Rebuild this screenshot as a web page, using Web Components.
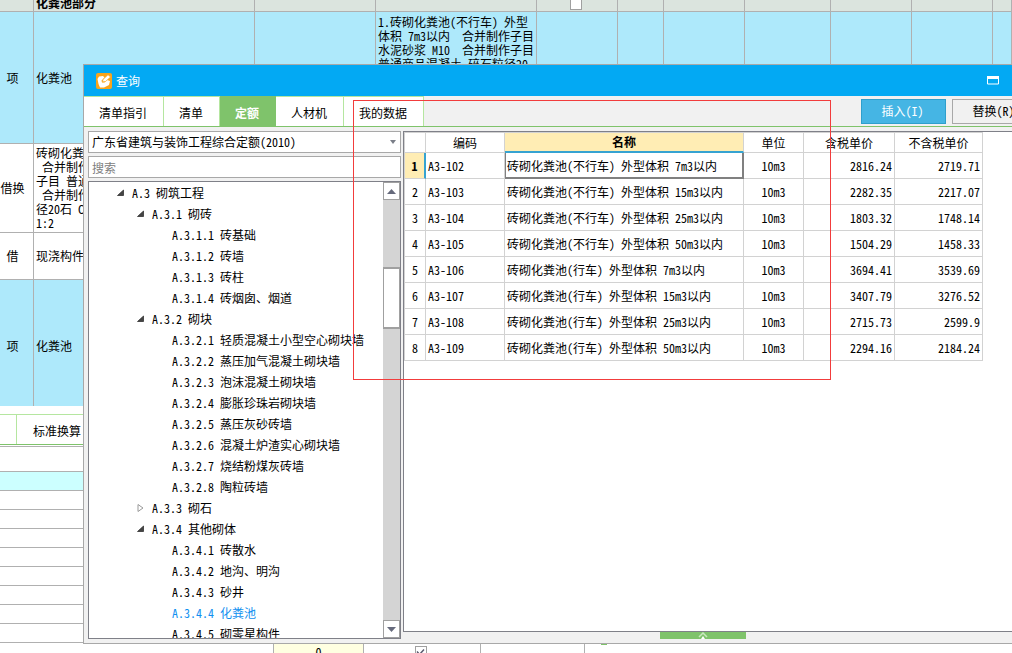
<!DOCTYPE html>
<html lang="zh-CN">
<head>
<meta charset="utf-8">
<title>查询</title>
<style>
body{margin:0;background:#fff;color:#000;font:12px/14px "Noto Sans Mono CJK SC","Noto Sans CJK SC",monospace}
</style>
</head>
<body>
<budget-app></budget-app>
<script>
function define(name, html, setup) {
  customElements.define(name, class extends HTMLElement {
    constructor() {
      super();
      const t = document.createElement('template');
      t.innerHTML = html;
      this.attachShadow({mode: 'open'}).append(t.content.cloneNode(true));
      if (setup) setup(this.shadowRoot);
    }
  });
}

define('tick-box', `
<style>
:host{display:inline-block;vertical-align:middle;line-height:0}
input{appearance:none;display:block;box-sizing:border-box;width:12px;height:12px;margin:0;border:1px solid #a0a0a0;background:#fff}
label{display:grid}
input,svg{grid-area:1/1}
svg{display:none;width:12px;height:12px}
input:checked+svg{display:block}
</style>
<label><input type="checkbox" aria-label="选择"><svg viewBox="0 0 12 12"><path d="M2 5.500l2.500 3L9 3.500" fill="none" stroke="#5c5c70" stroke-width="1.500"/></svg></label>`);

// Bill of quantities behind the dialog
define('bill-sheet', `
<style>
:host{display:block;margin-top:-6px}
table{width:100%;border-spacing:0;table-layout:fixed}
td{box-sizing:border-box;padding:0 2px;border-right:1px solid #b0b0b0;border-bottom:1px solid #b0b0b0;white-space:pre;overflow:hidden}
td:first-child{text-align:center;padding:0 8px 0 0}
.head{background:#dbe4de;font-weight:bold}
.head td{height:18px;line-height:16px}
.head .c{text-align:center;padding:0 4px 0 2px}
.item{background:#aee9fb}
.item td{height:132px}
.item .desc{vertical-align:top;padding-top:3px}
.sub td{height:89px}
.sub.low td{height:47px}
.item.last td{height:126px;border-bottom:0;padding-top:6px}
.desc div{height:56px}
</style>
<table>
<colgroup><col style="width:34px"><col style="width:221px"><col style="width:121px"><col style="width:161px"><col style="width:81px"><col style="width:46px"><col style="width:81px"><col style="width:86px"><col style="width:81px"><col style="width:81px"><col></colgroup>
<tbody>
<tr class="head"><td></td><td>化粪池部分</td><td></td><td></td><td class="c"><tick-box></tick-box></td><td></td><td></td><td></td><td></td><td></td><td></td></tr>
<tr class="item"><td>项</td><td>化粪池</td><td></td><td class="desc"><div>1.砖砌化粪池(不行车) 外型
体积 7m3以内  合并制作子目
水泥砂浆 M10  合并制作子目
普通商品混凝土 碎石粒径20</div></td><td></td><td></td><td></td><td></td><td></td><td></td><td></td></tr>
<tr class="sub"><td>借换</td><td>砖砌化粪
 合并制作
子目 普通
 合并制作
径20石 C
1:2</td><td></td><td></td><td></td><td></td><td></td><td></td><td></td><td></td><td></td></tr>
<tr class="sub low"><td>借</td><td>现浇构件</td><td></td><td></td><td></td><td></td><td></td><td></td><td></td><td></td><td></td></tr>
<tr class="item last"><td>项</td><td>化粪池</td><td></td><td></td><td></td><td></td><td></td><td></td><td></td><td></td><td></td></tr>
</tbody></table>`);

define('detail-pane', `
<style>
:host{display:block;flex:1;min-height:0;margin-top:8px;overflow:hidden}
nav{display:flex;height:29px;border-top:1px solid #b5e6a0;border-bottom:1px solid #7fc36b}
i{width:16px;border-right:1px solid #b5e6a0}
button{border:0;background:none;padding:3px 16px 0;font:inherit;color:inherit}
ul{list-style:none;margin:1px 0 0;padding:0;border-top:1px solid #b0b0b0}
li{height:18px;border-bottom:1px solid #b0b0b0}
li:first-child{height:24px}
.on{background:#ccffff}
</style>
<nav><i></i><button>标准换算</button></nav>
<ul><li></li><li class="on"></li><li></li><li></li><li></li><li></li><li></li><li></li><li></li><li></li></ul>`);

define('sum-strip', `
<style>
:host{display:grid;grid-template-columns:274px 90px 117px 104px 1fr;height:10px;overflow:hidden}
div{box-sizing:border-box;height:18px;border-right:1px solid #b0b0b0;text-align:center;line-height:18px}
.y{background:#ffffe1}
.t{padding:3px 3px 0 0;line-height:0}
.g{border:0;padding-left:16px}
.g::before{content:"";display:block;width:6px;height:2px;background:#7fc36b}
</style>
<div></div><div class="y">0</div><div class="t"><tick-box></tick-box></div><div></div><div class="g"></div>`,
root => {
  const box = root.querySelector('tick-box');
  customElements.upgrade(box);
  box.shadowRoot.querySelector('input').checked = true;
});

define('title-bar', `
<style>
:host{display:flex;align-items:center;gap:4px;height:31px;padding:0 73px 0 12px;background:#03a9f3;color:#fff}
h1{margin:0 auto 0 0;font:inherit}
button{border:0;background:none;padding:0;line-height:0}
</style>
<svg width="16" height="16" viewBox="0 0 16 16"><rect width="16" height="16" rx="2" fill="#f9a41a"/><path d="M1.500 6L3 3.500 7 3 8.500 4.500 5.500 7.500 6 9.500 8.500 9.500 11 7 14 8 13 12 8 14.500H4L2.500 11z" fill="#fff"/><path d="M6.500 8.800L7 6.500 12 1.800 14.500 4 9.500 8.500z" fill="#fff" stroke="#f9a41a" stroke-width=".6"/></svg>
<h1>查询</h1>
<button aria-label="最大化"><svg width="12" height="9" viewBox="0 0 12 9"><path d="M.5.5h11v7.500H.5z" fill="none" stroke="#fff"/><path d="M0 0h12v3H0z" fill="#fff"/></svg></button>`);

define('tab-bar', `
<style>
:host{display:flex;height:30px;border-bottom:1px solid #7fc36b;background:#f1f1f1;padding-right:35px}
[role=tablist]{display:flex;margin-right:auto}
button{font:inherit;color:inherit;white-space:nowrap}
[role=tab]{border:solid #b5e6a0;border-width:1px 1px 0 0;background:#fff;padding:2px 16px 0 15px}
[aria-selected=true]{background:#7fc36b;border-color:#7fc36b;color:#fff;font-weight:bold}
.act{display:flex;gap:6px;align-items:center}
.act button{height:25px;width:85px;padding:0 2px 0 0;border:1px solid #a8a8a8;background:#f1f1f1}
.act .go{background:#45b5e4;border-color:#2f9fcc;color:#fff}
</style>
<div role="tablist"><button role="tab">清单指引</button><button role="tab">清单</button><button role="tab" aria-selected="true">定额</button><button role="tab">人材机</button><button role="tab">我的数据</button></div>
<div class="act"><button class="go">插入(I)</button><button>替换(R)</button></div>`);

define('quota-tree', `
<style>
:host{display:flex;flex:1;min-height:0;border:1px solid #7f8088;background:#fff;overflow:hidden}
.view{flex:1;overflow:hidden}
ul{list-style:none;margin:0;padding:0 0 0 20px}
.view>ul{padding-left:28px}
div.n{display:flex;align-items:center;height:21px;gap:8px;white-space:pre}
svg{flex:none;width:7px;height:8px}
.on{color:#1090f0}
.bar{width:17px;background:#d4d4d4;display:flex;flex-direction:column}
.bar button{box-sizing:border-box;height:18px;border:1px solid #a0a0a0;background:#fff;padding:0;display:grid;place-items:center}
.bar svg{width:9px;height:5px;margin:0}
.thumb{height:58px;margin:67px 0 auto;border:solid #a0a0a0;border-width:2px 1px;background:#fff}
</style>
<div class="view"></div>
<div class="bar"><button aria-label="向上"><svg viewBox="0 0 9 5"><path d="M0 5l4.500-5L9 5z" fill="#666a7c"/></svg></button><div class="thumb"></div><button aria-label="向下"><svg viewBox="0 0 9 5"><path d="M0 0l4.500 5L9 0z" fill="#666a7c"/></svg></button></div>`,
root => {
  const data = [['A.3 砌筑工程', [
    ['A.3.1 砌砖', [['A.3.1.1 砖基础'], ['A.3.1.2 砖墙'], ['A.3.1.3 砖柱'], ['A.3.1.4 砖烟囱、烟道']]],
    ['A.3.2 砌块', [['A.3.2.1 轻质混凝土小型空心砌块墙'], ['A.3.2.2 蒸压加气混凝土砌块墙'], ['A.3.2.3 泡沫混凝土砌块墙'], ['A.3.2.4 膨胀珍珠岩砌块墙'], ['A.3.2.5 蒸压灰砂砖墙'], ['A.3.2.6 混凝土炉渣实心砌块墙'], ['A.3.2.7 烧结粉煤灰砖墙'], ['A.3.2.8 陶粒砖墙']]],
    ['A.3.3 砌石', []],
    ['A.3.4 其他砌体', [['A.3.4.1 砖散水'], ['A.3.4.2 地沟、明沟'], ['A.3.4.3 砂井'], ['A.3.4.4 化粪池'], ['A.3.4.5 砌零星构件']]]
  ]]];
  const open = '<path d="M6.500 1v5.500H.5z" fill="#444" stroke="#222" stroke-width=".7"/>';
  const shut = '<path d="M1 .5L6 4 1 7.500z" fill="#fff" stroke="#999"/>';
  const list = items => '<ul>' + items.map(([text, kids]) =>
    `<li><div class="n${text.startsWith('A.3.4.4') ? ' on' : ''}"><svg viewBox="0 0 7 8">${kids ? (kids.length ? open : shut) : ''}</svg>${text}</div>${kids && kids.length ? list(kids) : ''}</li>`).join('') + '</ul>';
  root.querySelector('.view').innerHTML = list(data);
});

define('quota-grid', `
<style>
:host{display:block;flex:1;min-height:0;border:1px solid #7f8088;background:#fff;overflow:hidden}
table{width:579px;table-layout:fixed;border-spacing:0;border:solid #d2d2d2;border-width:1px 0 0 1px}
th,td{box-sizing:border-box;padding:0 2px;border:solid #d2d2d2;border-width:0 1px 1px 0;font-weight:normal;white-space:pre}
th{height:20px}
td{height:26px}
tbody th{text-align:center;padding:0}
td:nth-child(4){text-align:center}
td:nth-child(n+5){text-align:right}
thead .on{background:#ffedb4;font-weight:bold;border-bottom:2px solid #36a3d1}
tbody .on{background:#ffedb4;font-weight:bold;border-right:2px solid #36a3d1}
td.cell{border:solid #808080;border-width:0 2px 2px 0;box-shadow:inset 1px 0 #808080;padding-top:2px}
</style>
<table>
<colgroup><col style="width:21px"><col style="width:79px"><col style="width:239px"><col style="width:60px"><col style="width:91px"><col style="width:88px"></colgroup>
<thead><tr><th></th><th>编码</th><th class="on">名称</th><th>单位</th><th>含税单价</th><th>不含税单价</th></tr></thead>
<tbody></tbody></table>`,
root => {
  const rows = [
    ['A3-102', '(不行车) 外型体积 7m3以内', '2816.24', '2719.71'],
    ['A3-103', '(不行车) 外型体积 15m3以内', '2282.35', '2217.07'],
    ['A3-104', '(不行车) 外型体积 25m3以内', '1803.32', '1748.14'],
    ['A3-105', '(不行车) 外型体积 50m3以内', '1504.29', '1458.33'],
    ['A3-106', '(行车) 外型体积 7m3以内', '3694.41', '3539.69'],
    ['A3-107', '(行车) 外型体积 15m3以内', '3407.79', '3276.52'],
    ['A3-108', '(行车) 外型体积 25m3以内', '2715.73', '2599.9'],
    ['A3-109', '(行车) 外型体积 50m3以内', '2294.16', '2184.24']
  ];
  root.querySelector('tbody').innerHTML = rows.map(([code, name, a, b], i) =>
    `<tr><th${i ? '' : ' class="on"'}>${i + 1}</th><td>${code}</td><td${i ? '' : ' class="cell"'}>砖砌化粪池${name}</td><td>10m3</td><td>${a}</td><td>${b}</td></tr>`).join('');
});

define('query-dialog', `
<style>
:host{display:flex;flex-direction:column;border:1px solid #a8a8a8;background:#f1f1f1}
main{display:flex;flex:1;min-height:0;gap:2px;padding:4px}
.side{flex:0 0 313px;min-width:0;display:flex;flex-direction:column;gap:3px}
.pick{display:grid;align-items:center}
.pick>*{grid-area:1/1}
.pick svg{justify-self:end;margin-right:5px;pointer-events:none}
select,input{appearance:none;box-sizing:border-box;width:100%;height:22px;margin:0;border:1px solid #a8a8a8;border-radius:0;background:#fff;padding:0 3px;font:inherit;color:#000}
input::placeholder{color:#808080;opacity:1}
.work{flex:1;min-width:0;display:flex;flex-direction:column}
footer{height:7px;padding-left:257px;line-height:0}
footer button{width:86px;height:7px;border:0;padding:0;background:#7fc36b;line-height:0}
</style>
<title-bar></title-bar>
<tab-bar></tab-bar>
<main>
<div class="side">
<div class="pick"><select aria-label="定额库"><option>广东省建筑与装饰工程综合定额(2010)</option></select><svg width="6" height="4" viewBox="0 0 6 4"><path d="M0 0h6L3 4z" fill="#7a7e88"/></svg></div>
<input type="text" placeholder="搜索" aria-label="搜索">
<quota-tree></quota-tree>
</div>
<div class="work"><quota-grid></quota-grid><footer><button aria-label="展开"><svg width="10" height="7" viewBox="0 0 10 7"><path d="M1 5l4-4 4 4" fill="none" stroke="#c8e8bd" stroke-width="1.500"/><path d="M3 7l2-3 2 3z" fill="#fff"/></svg></button></footer></div>
</main>`);

define('budget-app', `
<style>
:host{display:flex;flex-direction:column;position:relative;height:100vh;overflow:hidden}
query-dialog{position:absolute;left:83px;right:-61px;top:64px;bottom:9px}
.mark{position:absolute;left:353px;top:100px;width:476px;height:278px;border:1px solid #f23c3c;pointer-events:none}
</style>
<bill-sheet></bill-sheet>
<detail-pane></detail-pane>
<sum-strip></sum-strip>
<query-dialog></query-dialog>
<div class="mark"></div>`);
</script>
</body>
</html>
